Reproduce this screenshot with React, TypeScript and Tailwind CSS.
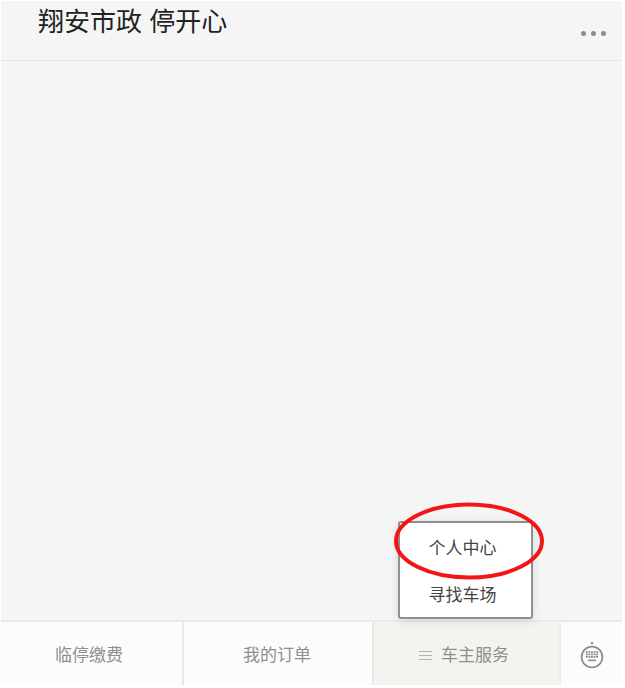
const cjk = "font-['Liberation_Sans','Noto_Sans_CJK_SC',sans-serif]";

function KeyboardIcon() {
  const keys = [];
  for (let row = 0; row < 3; row++) {
    for (let col = 0; col < 5; col++) {
      keys.push(<rect key={`${row}-${col}`} x={5.8 + col * 2.6} y={10.2 + row * 2.4} width="1.9" height="1.7" fill="#8a8a8a" />);
    }
  }
  return (
    <svg width="24" height="30" viewBox="0 0 24 30" fill="none">
      <circle cx="12" cy="2.2" r="1.2" fill="#8a8a8a" />
      <circle cx="12" cy="16" r="10.4" stroke="#8f8f8f" strokeWidth="1.8" />
      {keys}
      <rect x="8" y="18.6" width="8" height="1.6" fill="#8a8a8a" />
    </svg>
  );
}

export default function App() {
  return (
    <div className={`${cjk} relative h-[688px] w-[625px] overflow-hidden bg-white`}>
      <div className="mt-[1px] ml-[1px] flex h-[684px] w-[621px] flex-col bg-[#f5f5f5]">
        <header className="flex h-[60px] shrink-0 border-b border-[#e6e6e6] pl-[37px]">
          <h1 className="mt-[6px] text-[26px] leading-[30px] font-normal text-[#222]">翔安市政 停开心</h1>
          <div className="mt-[30px] mr-[16px] ml-auto flex h-[5px] gap-[5px]">
            <span className="h-[5px] w-[5px] rounded-full bg-[#8c8c8c]" />
            <span className="h-[5px] w-[5px] rounded-full bg-[#8c8c8c]" />
            <span className="h-[5px] w-[5px] rounded-full bg-[#8c8c8c]" />
          </div>
        </header>

        <main className="flex-1" />

        <footer className="flex h-[65px] shrink-0 border-t-2 border-[#eaeaea] bg-[#fcfcfc] text-[17px] text-[#8f8f8f]">
          <div className="flex w-[183px] items-center justify-center border-r-2 border-[#e8e8e8] pt-[4px] pr-[5px]">临停缴费</div>
          <div className="flex w-[190px] items-center justify-center border-r-2 border-[#e8e8e8] pt-[4px] pr-[2px]">我的订单</div>
          <div className="flex w-[185px] items-center justify-center gap-[9px] bg-[#f3f3ef] pt-[4px] pr-[5px]">
            <span className="flex w-[13px] flex-col gap-[3px]">
              <span className="h-px bg-[#b0b0b0]" />
              <span className="h-px bg-[#b0b0b0]" />
              <span className="h-px bg-[#b0b0b0]" />
            </span>
            车主服务
          </div>
          <div className="flex flex-1 items-center justify-center border-l-2 border-[#eeeeee] pt-[4px]">
            <KeyboardIcon />
          </div>
        </footer>
      </div>

      <div className="absolute top-[521px] left-[398px] h-[98px] w-[135px] rounded-[3px] border-2 border-[#8f8f8f] bg-white text-[17px] text-[#444] shadow-[0_2px_10px_rgba(0,0,0,0.12)]">
        <div className="flex h-[48px] items-center justify-center pt-[4px] pr-[6px]">个人中心</div>
        <div className="flex h-[46px] items-center justify-center pt-[3px] pr-[6px]">寻找车场</div>
      </div>

      <svg className="absolute top-[500px] left-[390px]" width="160" height="84" viewBox="0 0 160 84" fill="none">
        <ellipse cx="79" cy="41" rx="73" ry="36.5" stroke="#f31616" strokeWidth="4" />
      </svg>
    </div>
  );
}
